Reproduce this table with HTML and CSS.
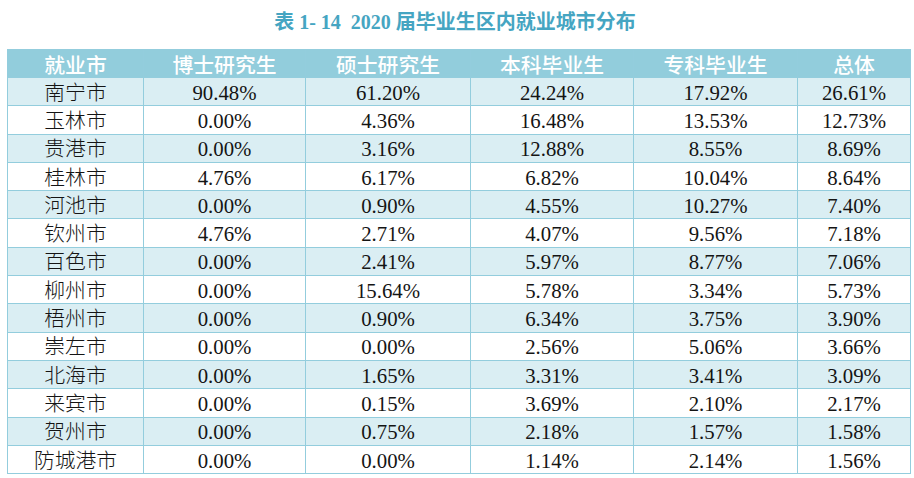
FILE: index.html
```html
<!DOCTYPE html>
<html lang="zh-CN">
<head>
<meta charset="utf-8">
<title>2020届毕业生区内就业城市分布</title>
<link rel="stylesheet" href="styles.css">
</head>
<body>
<h1 class="title">表 1- 14&nbsp;&nbsp;2020 届毕业生区内就业城市分布</h1>
<table class="data">
  <colgroup>
    <col class="c1"><col class="c2"><col class="c3"><col class="c4"><col class="c5"><col class="c6">
  </colgroup>
  <thead>
    <tr><th>就业市</th><th>博士研究生</th><th>硕士研究生</th><th>本科毕业生</th><th>专科毕业生</th><th>总体</th></tr>
  </thead>
  <tbody>
    <tr class="alt"><td>南宁市</td><td>90.48%</td><td>61.20%</td><td>24.24%</td><td>17.92%</td><td>26.61%</td></tr>
    <tr><td>玉林市</td><td>0.00%</td><td>4.36%</td><td>16.48%</td><td>13.53%</td><td>12.73%</td></tr>
    <tr class="alt"><td>贵港市</td><td>0.00%</td><td>3.16%</td><td>12.88%</td><td>8.55%</td><td>8.69%</td></tr>
    <tr><td>桂林市</td><td>4.76%</td><td>6.17%</td><td>6.82%</td><td>10.04%</td><td>8.64%</td></tr>
    <tr class="alt"><td>河池市</td><td>0.00%</td><td>0.90%</td><td>4.55%</td><td>10.27%</td><td>7.40%</td></tr>
    <tr><td>钦州市</td><td>4.76%</td><td>2.71%</td><td>4.07%</td><td>9.56%</td><td>7.18%</td></tr>
    <tr class="alt"><td>百色市</td><td>0.00%</td><td>2.41%</td><td>5.97%</td><td>8.77%</td><td>7.06%</td></tr>
    <tr><td>柳州市</td><td>0.00%</td><td>15.64%</td><td>5.78%</td><td>3.34%</td><td>5.73%</td></tr>
    <tr class="alt"><td>梧州市</td><td>0.00%</td><td>0.90%</td><td>6.34%</td><td>3.75%</td><td>3.90%</td></tr>
    <tr><td>崇左市</td><td>0.00%</td><td>0.00%</td><td>2.56%</td><td>5.06%</td><td>3.66%</td></tr>
    <tr class="alt"><td>北海市</td><td>0.00%</td><td>1.65%</td><td>3.31%</td><td>3.41%</td><td>3.09%</td></tr>
    <tr><td>来宾市</td><td>0.00%</td><td>0.15%</td><td>3.69%</td><td>2.10%</td><td>2.17%</td></tr>
    <tr class="alt"><td>贺州市</td><td>0.00%</td><td>0.75%</td><td>2.18%</td><td>1.57%</td><td>1.58%</td></tr>
    <tr><td>防城港市</td><td>0.00%</td><td>0.00%</td><td>1.14%</td><td>2.14%</td><td>1.56%</td></tr>
  </tbody>
</table>
</body>
</html>
```
FILE: styles.css
```css
html, body {
  margin: 0;
  padding: 0;
  background: #ffffff;
}

.title {
  box-sizing: border-box;
  height: 49px;
  margin: 0;
  padding-top: 9px;
  padding-right: 4px;
  line-height: 26px;
  text-align: center;
  font-family: "Liberation Serif", "Noto Sans CJK SC", serif;
  font-size: 20px;
  font-weight: bold;
  color: #45a5c2;
}

.data {
  margin-left: 7px;
  width: 903px;
  table-layout: fixed;
  border-collapse: collapse;
  font-family: "Liberation Serif", "Noto Sans CJK SC", serif;
  font-size: 20.8px;
  color: #141414;
}

.c1 { width: 136px; }
.c2 { width: 162px; }
.c3 { width: 165px; }
.c4 { width: 163px; }
.c5 { width: 164px; }
.c6 { width: 113px; }

.data th,
.data td {
  border: 1px solid #93cddd;
  padding: 0;
  text-align: center;
  vertical-align: middle;
  line-height: 24px;
  white-space: nowrap;
}

.data thead tr {
  height: 28px;
}

.data th {
  background: #92cddc;
  color: #ffffff;
  font-family: "Noto Sans CJK SC", sans-serif;
  font-weight: 500;
  font-size: 20.8px;
}

.data tbody tr {
  height: 28.3px;
}

.data tbody tr.alt td {
  background: #daeef3;
}

.data td {
  padding-top: 2px;
  font-weight: 300;
}
```
